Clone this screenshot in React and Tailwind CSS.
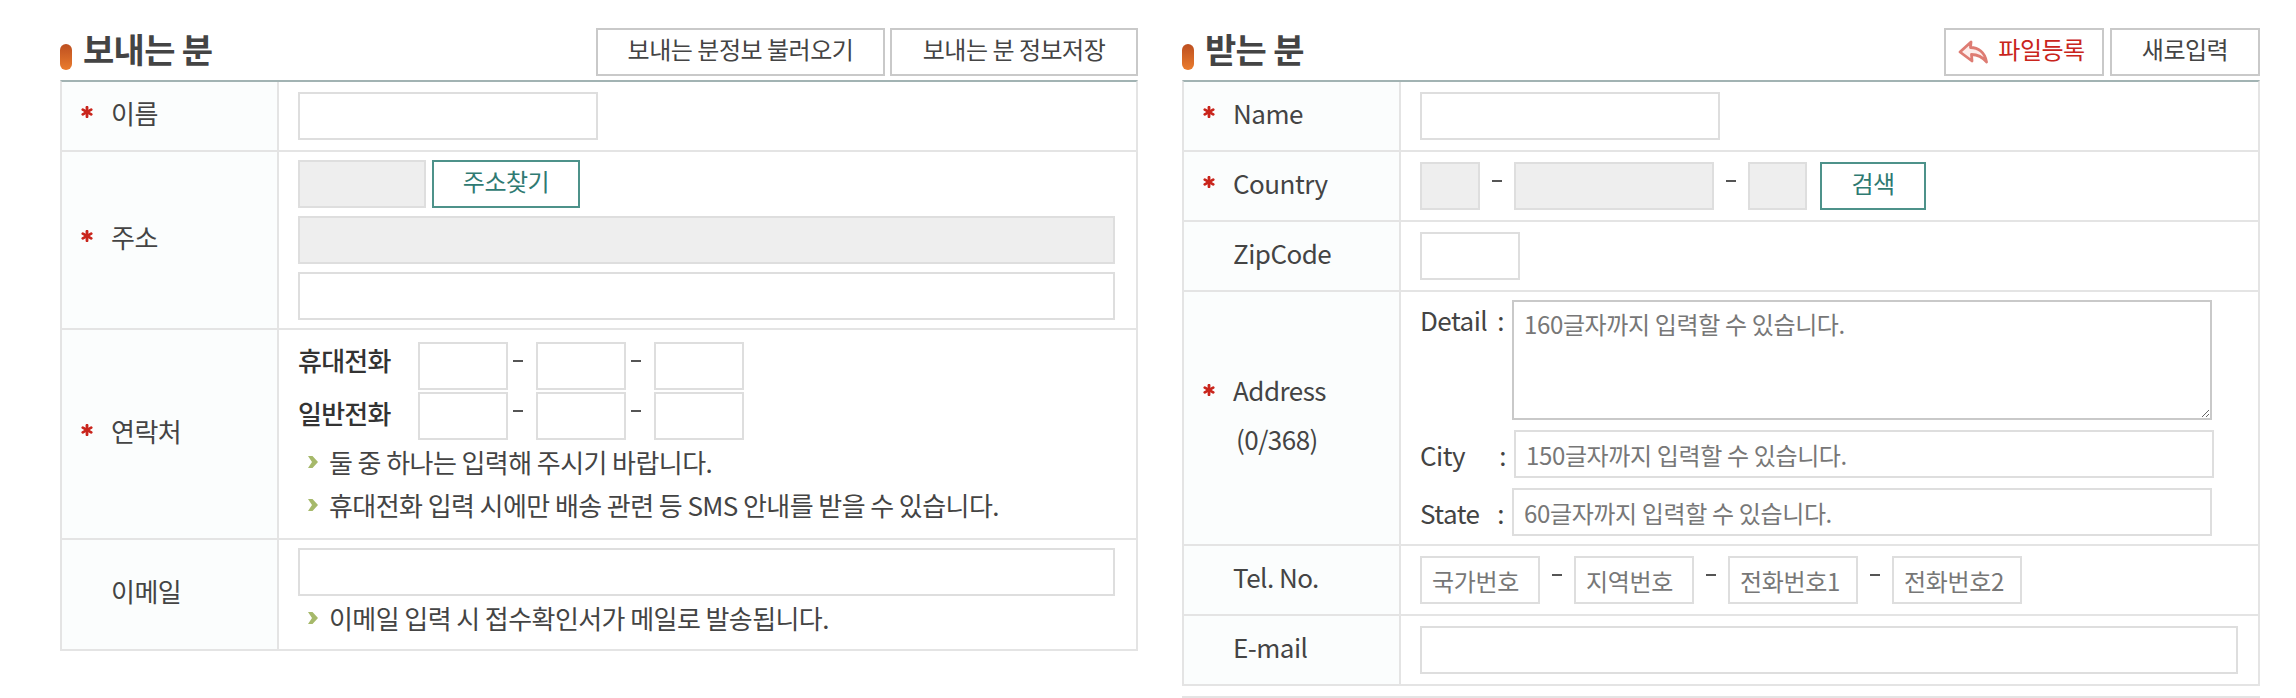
const field = "h-12 border-2 border-[#dedede] bg-white px-[10px] text-[24px] tracking-[-0.015em] text-[#444] outline-none placeholder:text-[#777]";
const locked = "h-12 border-2 border-[#dedede] bg-[#eeeeee] outline-none";

// red asterisk in front of required labels
function Star() {
  return (
    <svg width="12" height="12" viewBox="0 0 12 12" className="shrink-0">
      <g stroke="#c9251c" strokeWidth="2.8" strokeLinecap="round">
        <path d="M6 1.2v9.6" />
        <path d="M1.8 3.6l8.4 4.8" />
        <path d="M10.2 3.6l-8.4 4.8" />
      </g>
    </svg>
  );
}

function Hint({ children }) {
  return (
    <p className="flex h-[43px] items-center pl-[10px] text-[26px] tracking-[-0.022em] text-[#444]">
      <svg width="10" height="12" viewBox="0 0 10 12" className="mr-[11px] shrink-0">
        <path d="M0 0h4.500l5.500 6-5.500 6H0l4-6z" fill="#a6b96a" />
      </svg>
      {children}
    </p>
  );
}

function Row({ label, required, sub, children, className = "" }) {
  return (
    <div className="grid grid-cols-[217px_1fr] border-b-2 border-[#e4e4e4]">
      <div className="flex flex-col justify-center border-r-2 border-[#e4e4e4] bg-[#fbfdfd] pl-[19px]">
        <div className="flex -translate-y-[4px] items-center">
          <span className="w-[30px]">{required && <Star />}</span>
          <span className="text-[26px] tracking-[-0.02em] text-[#444]">{label}</span>
        </div>
        {sub && <div className="mt-[10px] -translate-y-[4px] pl-[33px] text-[26px] tracking-[-0.02em] text-[#444]">{sub}</div>}
      </div>
      <div className={`pl-[19px] ${className}`}>{children}</div>
    </div>
  );
}

function Header({ title, children }) {
  return (
    <div className="flex h-20 items-start justify-between pt-[28px]">
      <h2 className="flex h-12 items-center text-[34px] font-bold tracking-[-0.02em] text-[#444]">
        <span className="mr-[11px] mt-[10px] h-[26px] w-3 rounded-[6px] bg-gradient-to-b from-[#bd4f20] to-[#ea7c2e]" />
        <span className="-translate-y-[4px]">{title}</span>
      </h2>
      <div className="flex gap-[5px]">{children}</div>
    </div>
  );
}

function TopButton({ className = "", children }) {
  return (
    <button className={`flex h-12 items-center justify-center border-2 border-[#c9c9c9] bg-white pb-[7px] text-[24px] tracking-[-0.02em] ${className}`}>
      {children}
    </button>
  );
}

function Dash({ className = "" }) {
  return <span className={`h-[2px] w-[10px] shrink-0 bg-[#555] ${className}`} />;
}

function TealButton({ className = "", children }) {
  return (
    <button className={`h-12 border-2 border-[#4d928a] bg-white pb-[6px] text-[24px] tracking-[-0.02em] text-[#2f7a72] ${className}`}>
      {children}
    </button>
  );
}

function PhoneLine({ label, className = "", labelClass = "" }) {
  return (
    <div className={`flex items-start ${className}`}>
      <span className={`w-[120px] text-[26px] font-medium leading-[38px] tracking-[-0.03em] text-[#333] ${labelClass}`}>{label}</span>
      <input className={`${field} w-[90px]`} />
      <Dash className="mx-[5px] mt-[18px]" />
      <span className="w-[8px]" />
      <input className={`${field} w-[90px]`} />
      <Dash className="mx-[5px] mt-[18px]" />
      <span className="w-[8px]" />
      <input className={`${field} w-[90px]`} />
    </div>
  );
}

function Sender() {
  return (
    <section className="w-[1078px]">
      <Header title="보내는 분">
        <TopButton className="w-[289px] text-[#444]">보내는 분정보 불러오기</TopButton>
        <TopButton className="w-[248px] text-[#444]">보내는 분 정보저장</TopButton>
      </Header>
      <div className="border-x-2 border-t-2 border-x-[#e4e4e4] border-t-[#a2b3b3]">
        <Row label="이름" required className="py-[10px]">
          <input className={`${field} block w-[300px]`} />
        </Row>
        <Row label="주소" required className="flex flex-col gap-2 py-2">
          <div className="flex gap-[6px]">
            <input disabled className={`${locked} w-[128px]`} />
            <TealButton className="w-[148px]">주소찾기</TealButton>
          </div>
          <input disabled className={`${locked} w-[817px]`} />
          <input className={`${field} w-[817px]`} />
        </Row>
        <Row label="연락처" required className="pb-3 pt-3">
          <PhoneLine label="휴대전화" labelClass="-translate-y-[1px]" />
          <PhoneLine label="일반전화" className="mt-[2px]" labelClass="translate-y-[2px]" />
          <Hint>둘 중 하나는 입력해 주시기 바랍니다.</Hint>
          <Hint>휴대전화 입력 시에만 배송 관련 등 SMS 안내를 받을 수 있습니다.</Hint>
        </Row>
        <Row label="이메일" className="pb-[10px] pt-2">
          <input className={`${field} block w-[817px]`} />
          <Hint>이메일 입력 시 접수확인서가 메일로 발송됩니다.</Hint>
        </Row>
      </div>
    </section>
  );
}

function AddressLine({ label, w, inputW, className = "" }) {
  return (
    <div className={`flex items-center ${className}`}>
      <span className={`flex shrink-0 justify-between pr-[8px] text-[26px] tracking-[-0.02em] text-[#444] ${w}`}>
        <span>{label}</span>
        <span>:</span>
      </span>
      {inputW}
    </div>
  );
}

function Receiver() {
  return (
    <section className="ml-[44px] w-[1078px]">
      <Header title="받는 분">
        <TopButton className="w-[160px] pr-[3px] text-[#c9251c]">
          <svg width="30" height="24" viewBox="0 0 30 24" className="mr-[8px] mt-[7px] -translate-x-[2px]">
            <path d="M2 12 13 2l-.5 5.500C20 7.500 27 12 28.500 22c-4-5-9-7.500-15-7.500L14 21z" fill="#fdeeec" stroke="#de7c73" strokeWidth="2.800" strokeLinejoin="round" />
          </svg>
          파일등록
        </TopButton>
        <TopButton className="ml-[1px] w-[150px] text-[#444]">새로입력</TopButton>
      </Header>
      <div className="border-x-2 border-t-2 border-x-[#e4e4e4] border-t-[#a2b3b3]">
        <Row label="Name" required className="py-[10px]">
          <input className={`${field} block w-[300px]`} />
        </Row>
        <Row label="Country" required className="flex items-center py-[10px]">
          <input disabled className={`${locked} w-[60px]`} />
          <Dash className="mx-[12px] -translate-y-[5px]" />
          <input disabled className={`${locked} w-[200px]`} />
          <Dash className="mx-[12px] -translate-y-[5px]" />
          <input disabled className={`${locked} w-[59px]`} />
          <TealButton className="ml-[13px] w-[106px]">검색</TealButton>
        </Row>
        <Row label="ZipCode" className="py-[10px]">
          <input className={`${field} block w-[100px]`} />
        </Row>
        <Row label="Address" required sub="(0/368)" className="pb-2 pt-2">
          <AddressLine
            label="Detail"
            w="w-[92px] self-start"
            inputW={
              <textarea
                placeholder="160글자까지 입력할 수 있습니다."
                className="block h-[120px] w-[700px] border-2 border-[#c9c9c9] bg-white px-[10px] py-[4px] text-[24px] tracking-[-0.015em] text-[#444] outline-none placeholder:text-[#777]"
              />
            }
          />
          <AddressLine
            label="City"
            w="w-[94px]"
            className="mt-[10px]"
            inputW={<input placeholder="150글자까지 입력할 수 있습니다." className={`${field} w-[700px]`} />}
          />
          <AddressLine
            label="State"
            w="w-[92px]"
            className="mt-[10px]"
            inputW={<input placeholder="60글자까지 입력할 수 있습니다." className={`${field} w-[700px]`} />}
          />
        </Row>
        <Row label="Tel. No." className="flex items-center py-[10px]">
          <input placeholder="국가번호" className={`${field} w-[120px]`} />
          <Dash className="mx-[12px] -translate-y-[5px]" />
          <input placeholder="지역번호" className={`${field} w-[120px]`} />
          <Dash className="mx-[12px] -translate-y-[5px]" />
          <input placeholder="전화번호1" className={`${field} w-[130px]`} />
          <Dash className="mx-[12px] -translate-y-[5px]" />
          <input placeholder="전화번호2" className={`${field} w-[130px]`} />
        </Row>
        <Row label="E-mail" className="py-[10px]">
          <input className={`${field} block w-[818px]`} />
        </Row>
      </div>
      <div className="mt-[10px] border-t-2 border-[#e4e4e4]" />
    </section>
  );
}

export default function App() {
  return (
    <div className="flex h-[698px] w-[2296px] overflow-hidden bg-white pl-[60px] font-['Noto_Sans_CJK_KR','Noto_Sans',sans-serif]">
      <Sender />
      <Receiver />
    </div>
  );
}
